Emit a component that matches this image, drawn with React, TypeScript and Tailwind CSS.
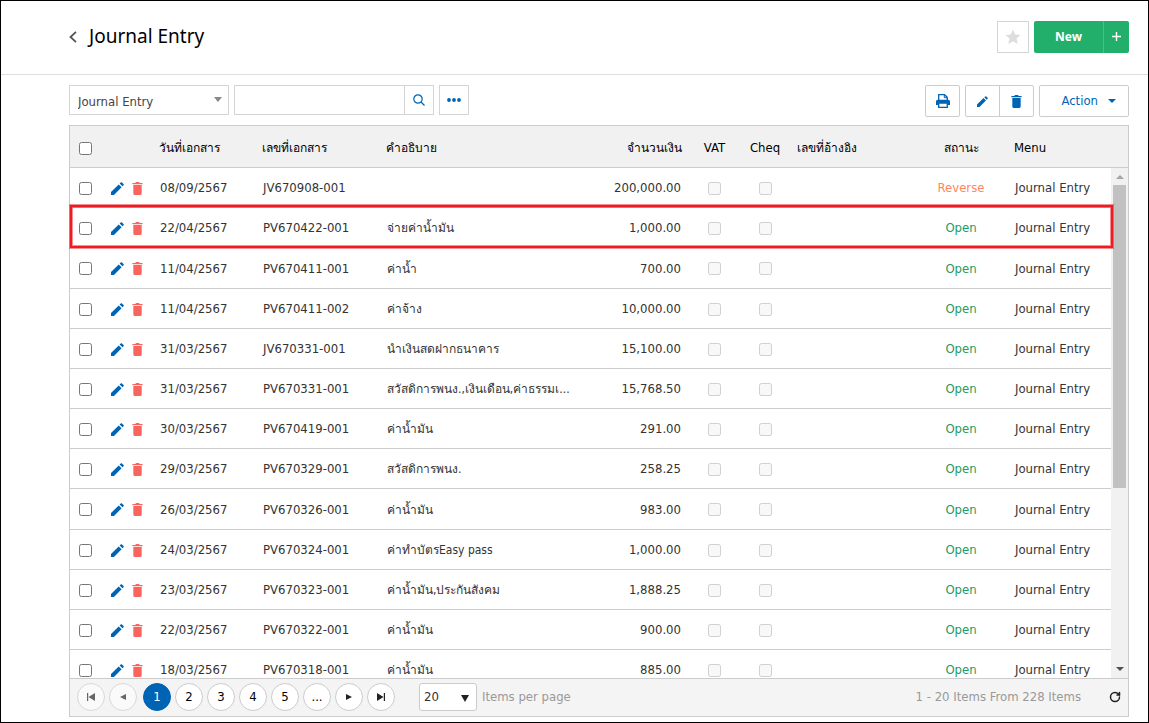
import React, { useState } from "react";
import { RotateCw } from "lucide-react";

interface Entry {
  date: string;
  docNo: string;
  description: string;
  amount: string;
  status: "Open" | "Reverse";
}

const entries: Entry[] = [
  { date: "08/09/2567", docNo: "JV670908-001", description: "", amount: "200,000.00", status: "Reverse" },
  { date: "22/04/2567", docNo: "PV670422-001", description: "จ่ายค่าน้ำมัน", amount: "1,000.00", status: "Open" },
  { date: "11/04/2567", docNo: "PV670411-001", description: "ค่าน้ำ", amount: "700.00", status: "Open" },
  { date: "11/04/2567", docNo: "PV670411-002", description: "ค่าจ้าง", amount: "10,000.00", status: "Open" },
  { date: "31/03/2567", docNo: "JV670331-001", description: "นำเงินสดฝากธนาคาร", amount: "15,100.00", status: "Open" },
  { date: "31/03/2567", docNo: "PV670331-001", description: "สวัสดิการพนง.,เงินเดือน,ค่าธรรมเ...", amount: "15,768.50", status: "Open" },
  { date: "30/03/2567", docNo: "PV670419-001", description: "ค่าน้ำมัน", amount: "291.00", status: "Open" },
  { date: "29/03/2567", docNo: "PV670329-001", description: "สวัสดิการพนง.", amount: "258.25", status: "Open" },
  { date: "26/03/2567", docNo: "PV670326-001", description: "ค่าน้ำมัน", amount: "983.00", status: "Open" },
  { date: "24/03/2567", docNo: "PV670324-001", description: "ค่าทำบัตรEasy pass", amount: "1,000.00", status: "Open" },
  { date: "23/03/2567", docNo: "PV670323-001", description: "ค่าน้ำมัน,ประกันสังคม", amount: "1,888.25", status: "Open" },
  { date: "22/03/2567", docNo: "PV670322-001", description: "ค่าน้ำมัน", amount: "900.00", status: "Open" },
  { date: "18/03/2567", docNo: "PV670318-001", description: "ค่าน้ำมัน", amount: "885.00", status: "Open" },
];

const pages = ["1", "2", "3", "4", "5", "..."];

const PencilIcon = ({ className = "" }: { className?: string }) => (
  <svg viewBox="0 0 14 14" className={className} fill="currentColor" aria-hidden="true">
    <path d="M0 14v-3.200L8.300 2.600l3.100 3.100L3.200 14zM9.300 1.700l1.200-1.200c.4-.4.9-.4 1.300 0l1.700 1.700c.4.4.4.9 0 1.300l-1.200 1.200z" />
  </svg>
);

const TrashIcon = ({ className = "" }: { className?: string }) => (
  <svg viewBox="0 0 11 14" className={className} fill="currentColor" aria-hidden="true">
    <path d="M0 1h3.200l.6-1h3.400l.6 1H11v1.300H0zM1 3.300h9v9.200c0 .8-.6 1.500-1.400 1.500H2.400C1.600 14 1 13.300 1 12.500z" />
  </svg>
);

const PrinterIcon = () => (
  <svg viewBox="0 0 16 14" className="h-[14px] w-4" aria-hidden="true">
    <path d="M3.700 6V.700h5.800l2.800 2.600V6" fill="none" stroke="currentColor" strokeWidth="1.300" />
    <path d="M9.300 .700v3h3" fill="none" stroke="currentColor" />
    <path d="M2.700 5.700h10.600A1.800 1.800 0 0 1 15 7.500V11H1V7.500a1.800 1.800 0 0 1 1.700-1.800z" fill="currentColor" />
    <path d="M3.700 9h8.600v4.300H3.700z" fill="#fff" stroke="currentColor" strokeWidth="1.300" />
  </svg>
);

const Columns = () => (
  <colgroup>
    <col className="w-[31px]" />
    <col className="w-[51px]" />
    <col className="w-[103px]" />
    <col className="w-[124px]" />
    <col className="w-[203px]" />
    <col className="w-[107px]" />
    <col className="w-[51px]" />
    <col className="w-[50px]" />
    <col />
    <col className="w-[92px]" />
    <col className="w-[104px]" />
  </colgroup>
);

const PagerButton = ({
  label,
  active = false,
  disabled = false,
  onClick,
  children,
}: {
  label: string;
  active?: boolean;
  disabled?: boolean;
  onClick?: () => void;
  children: React.ReactNode;
}) => (
  <button
    type="button"
    aria-label={label}
    disabled={disabled}
    onClick={onClick}
    className={`flex size-7 items-center justify-center rounded-full border ${
      active
        ? "border-[#0064b4] bg-[#0064b4] text-white"
        : "border-[#ccc] bg-white text-black disabled:border-[#d8d8d8] disabled:bg-[#fafafa] disabled:text-[#666]"
    }`}>
    {children}
  </button>
);

const App: React.FC = () => {
  const [page, setPage] = useState("1");

  return (
    <div className="flex h-screen flex-col border border-black bg-white font-['DejaVu_Sans_Condensed','Noto_Sans',sans-serif] text-[13px] leading-5 text-[#333]">
      <header className="flex h-[74px] shrink-0 items-center justify-between border-b border-[#ddd] pr-[19px] pb-[2px] pl-[68px]">
        <div className="flex items-center gap-3">
          <a href="#back" aria-label="Back" className="text-[#555]">
            <svg viewBox="0 0 8 12" className="h-3 w-2" fill="none" stroke="currentColor" strokeWidth="1.8">
              <path d="M7 0.800 1.500 6 7 11.200" />
            </svg>
          </a>
          <h1 className="pb-px font-['Noto_Sans','DejaVu_Sans',sans-serif] text-[19px] leading-7 text-black">Journal Entry</h1>
        </div>
        <div className="flex gap-[5px]">
          <button type="button" aria-label="Favorite" className="flex size-8 items-center justify-center border border-[#d5d5d5] text-[#ddd]">
            <svg viewBox="0 0 16 16" className="size-4" fill="currentColor">
              <path d="M8 .5l2.200 5 5.400.500-4.100 3.600 1.200 5.400L8 12.200 3.300 15l1.200-5.400L.4 6l5.400-.5z" />
            </svg>
          </button>
          <div className="flex h-8 overflow-hidden rounded-xs bg-[#21af6b] text-white">
            <button type="button" className="w-[69px] font-['Noto_Sans',sans-serif] text-xs font-bold">New</button>
            <button type="button" aria-label="Add" className="flex w-[26px] items-center justify-center border-l border-[#3fc583]">
              <svg viewBox="0 0 9 9" className="size-[9px]" stroke="currentColor" strokeWidth="1.4">
                <path d="M4.500 0v9M0 4.500h9" />
              </svg>
            </button>
          </div>
        </div>
      </header>

      <main className="flex min-h-0 flex-1 flex-col pt-[10px] pr-[19px] pb-[5px] pl-[68px]">
        <div className="mb-2 flex items-start justify-between">
          <div className="flex gap-[5px]">
            <div className="relative">
              <select aria-label="Menu" className="h-[30px] w-40 appearance-none border border-[#d5d5d5] bg-white pt-1 pl-2 text-[#444]">
                <option>Journal Entry</option>
              </select>
              <svg viewBox="0 0 8 5" className="pointer-events-none absolute top-3 right-[7px] h-[5px] w-2" fill="#888">
                <path d="M0 0h8L4 5z" />
              </svg>
            </div>
            <form className="flex" onSubmit={(e) => e.preventDefault()}>
              <input type="text" aria-label="Search" className="h-[30px] w-[171px] border border-[#d5d5d5] px-2 outline-none" />
              <button type="submit" aria-label="Search" className="flex h-[30px] w-[29px] items-center justify-center border border-l-0 border-[#d5d5d5] text-[#0064b4]">
                <svg viewBox="0 0 12 12" className="size-3" fill="none" stroke="currentColor" strokeWidth="1.200">
                  <circle cx="5" cy="5" r="4.200" />
                  <path d="M8 8l3.500 3.500" />
                </svg>
              </button>
            </form>
            <button type="button" aria-label="More" className="flex h-[30px] w-[30px] items-center justify-center border border-[#d5d5d5] text-[#0064b4]">
              <svg viewBox="0 0 14 4" className="h-1 w-[14px]" fill="currentColor">
                <circle cx="2" cy="2" r="1.900" />
                <circle cx="7" cy="2" r="1.900" />
                <circle cx="12" cy="2" r="1.900" />
              </svg>
            </button>
          </div>

          <div className="flex gap-[5px] text-[#0064b4]">
            <button type="button" aria-label="Print" className="flex h-8 w-[35px] items-center justify-center rounded-xs border border-[#ccc]">
              <PrinterIcon />
            </button>
            <div className="flex h-8 rounded-xs border border-[#ccc]">
              <button type="button" aria-label="Edit" className="flex w-[34px] items-center justify-center border-r border-[#ccc]">
                <PencilIcon className="size-[11px]" />
              </button>
              <button type="button" aria-label="Delete" className="flex w-[33px] items-center justify-center">
                <TrashIcon className="h-[13px] w-[11px]" />
              </button>
            </div>
            <button type="button" className="flex h-8 w-[90px] items-center justify-end gap-[10px] rounded-xs border border-[#ccc] pr-3">
              Action
              <svg viewBox="0 0 8 4" className="h-1 w-2" fill="currentColor">
                <path d="M0 0h8L4 4z" />
              </svg>
            </button>
          </div>
        </div>

        <section className="flex min-h-0 flex-1 flex-col border border-[#ccc]">
          <div className="border-b border-[#ccc] bg-[#f1f1f1] pr-[17px]">
            <table className="w-full table-fixed text-left text-black">
              <Columns />
              <thead>
                <tr className="h-[41px] [&>th]:px-[7px] [&>th]:pt-[2px] [&>th]:font-normal [&>th]:whitespace-nowrap">
                  <th><input type="checkbox" aria-label="Select all" className="mx-[2px] mt-[2px] block size-[13px]" /></th>
                  <th></th>
                  <th className="text-xs">วันที่เอกสาร</th>
                  <th className="text-xs">เลขที่เอกสาร</th>
                  <th className="text-xs">คำอธิบาย</th>
                  <th className="text-right text-xs">จำนวนเงิน</th>
                  <th className="text-center">VAT</th>
                  <th className="text-center">Cheq</th>
                  <th className="text-xs">เลขที่อ้างอิง</th>
                  <th className="text-center text-xs">สถานะ</th>
                  <th>Menu</th>
                </tr>
              </thead>
            </table>
          </div>

          <div className="relative flex min-h-0 flex-1">
            <div className="min-w-0 flex-1 overflow-hidden">
              <table className="w-full table-fixed text-left">
                <Columns />
                <tbody>
                  {entries.map((entry) => (
                    <tr
                      key={entry.docNo}
                      className="h-10 border-b border-[#ccc] nth-[6n+3]:h-[41px] first:h-[39px] [&>td]:px-2 [&>td]:pt-[2px] [&>td]:leading-5 [&>td]:whitespace-nowrap">
                      <td><input type="checkbox" aria-label={`Select ${entry.docNo}`} className="mx-px block size-[13px]" /></td>
                      <td>
                        <div className="flex items-center gap-2">
                          <button type="button" aria-label="Edit" className="ml-[2px] text-[#0064b4]">
                            <PencilIcon className="size-[13px]" />
                          </button>
                          <button type="button" aria-label="Delete" className="text-[#f9645c]">
                            <TrashIcon className="h-[13px] w-[11px]" />
                          </button>
                        </div>
                      </td>
                      <td>{entry.date}</td>
                      <td>{entry.docNo}</td>
                      <td className="text-xs">{entry.description}</td>
                      <td className="text-right">{entry.amount}</td>
                      <td><input type="checkbox" disabled aria-label="VAT" className="mx-auto block size-[13px]" /></td>
                      <td><input type="checkbox" disabled aria-label="Cheq" className="mx-auto block size-[13px]" /></td>
                      <td></td>
                      <td className={`text-center ${entry.status === "Open" ? "text-[#1e9b62]" : "text-[#ff875f]"}`}>
                        {entry.status}
                      </td>
                      <td>Journal Entry</td>
                    </tr>
                  ))}
                </tbody>
              </table>
            </div>

            {/* Scrollbar */}
            <div className="flex w-[17px] flex-col items-center justify-between bg-[#f1f1f1] py-[7px]">
              <svg viewBox="0 0 8 4" className="h-1 w-2" fill="#a3a3a3">
                <path d="M0 4h8L4 0z" />
              </svg>
              <div className="mt-[6px] mb-auto h-[303px] w-[13px] bg-[#c1c1c1]" />
              <svg viewBox="0 0 8 4" className="h-1 w-2" fill="#505050">
                <path d="M0 0h8L4 4z" />
              </svg>
            </div>

            {/* Highlighted row */}
            <div className="pointer-events-none absolute top-[37px] right-[15px] left-0 h-[43px] border-2 border-[#ed1c24] ring-1 ring-[#ed1c24]/50 inset-ring-1 inset-ring-[#ed1c24]/50" />
          </div>

          <footer className="flex h-[38px] shrink-0 items-center justify-between border-t border-[#ccc] bg-[#f4f4f4] pr-[7px] pb-[2px] pl-[7px] text-[#999]">
            <div className="flex items-center">
              <nav aria-label="Pages" className="flex gap-[6px]">
                <div className="flex gap-1">
                  <PagerButton label="First page" disabled>
                    <svg viewBox="0 0 8 8" className="size-2" fill="currentColor"><path d="M0 0h1.200v8H0zM8 0v8L1.500 4z" /></svg>
                  </PagerButton>
                  <PagerButton label="Previous page" disabled>
                    <svg viewBox="0 0 6 6" className="size-[6px]" fill="currentColor"><path d="M6 0v6L0 3z" /></svg>
                  </PagerButton>
                </div>
                <div className="flex gap-1">
                  {pages.map((item) => (
                    <PagerButton key={item} label={`Page ${item}`} active={item === page} onClick={() => setPage(item)}>
                      {item}
                    </PagerButton>
                  ))}
                  <PagerButton label="Next page">
                    <svg viewBox="0 0 6 6" className="size-[6px]" fill="#222"><path d="M0 0v6l6-3z" /></svg>
                  </PagerButton>
                  <PagerButton label="Last page">
                    <svg viewBox="0 0 8 8" className="size-2" fill="#222"><path d="M6.800 0H8v8H6.800zM0 0v8l6.500-4z" /></svg>
                  </PagerButton>
                </div>
              </nav>
              <div className="relative ml-6">
                <select id="page-size" className="block h-7 w-[58px] appearance-none rounded-[3px] border border-[#ccc] bg-white pt-px pl-1 text-[#333]">
                  <option>20</option>
                </select>
                <svg viewBox="0 0 8 7" className="pointer-events-none absolute top-3 right-2 h-[7px] w-2" fill="#222">
                  <path d="M0 0h8L4 7z" />
                </svg>
              </div>
              <label htmlFor="page-size" className="ml-[5px] pt-px">Items per page</label>
            </div>
            <div className="flex items-center gap-7">
              <span>1 - 20 Items From 228 Items</span>
              <button type="button" aria-label="Refresh" className="text-[#222]">
                <RotateCw className="size-3" strokeWidth={3} />
              </button>
            </div>
          </footer>
        </section>
      </main>
    </div>
  );
};

export default App;
